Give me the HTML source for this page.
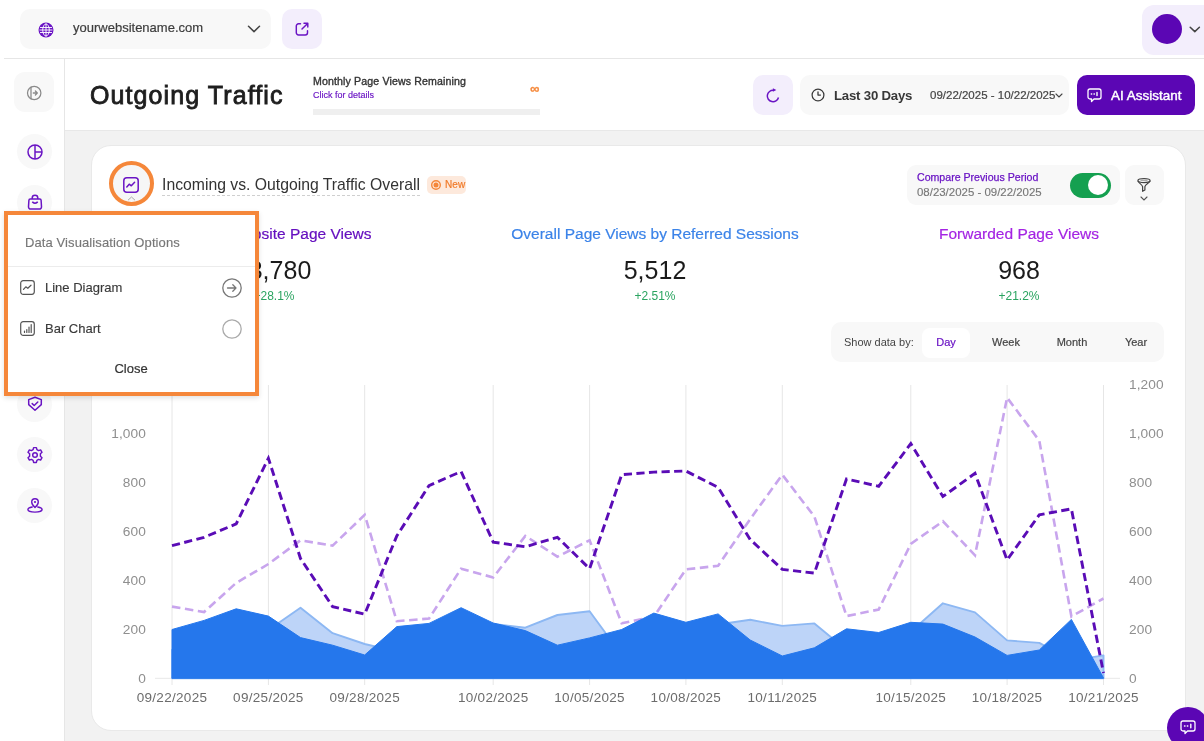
<!DOCTYPE html>
<html><head><meta charset="utf-8">
<style>
*{box-sizing:border-box;margin:0;padding:0}
html,body{width:1204px;height:741px;overflow:hidden;background:#fff;font-family:"Liberation Sans",sans-serif;color:#333}
.a{position:absolute}
.t{position:absolute;white-space:nowrap;line-height:1;will-change:transform}
svg.chart{position:absolute;left:0;top:0;will-change:transform}
.yl{font-family:"Liberation Sans",sans-serif;font-size:13.7px;letter-spacing:0.1px;fill:#8f8f8f}
.xl{font-family:"Liberation Sans",sans-serif;font-size:13.5px;letter-spacing:0.3px;fill:#6c6c6c}
.ic{position:absolute;overflow:visible}
</style></head><body>

<!-- top bar -->
<div class="a" style="left:4px;top:58px;width:1200px;height:1px;background:#e6e6e6"></div>
<div class="a" style="left:20px;top:9px;width:251px;height:40px;background:#f8f8f8;border-radius:10px"></div>
<svg class="ic" style="left:38.2px;top:21.6px" width="16" height="16" viewBox="0 0 16 16">
  <circle cx="8" cy="8" r="7.5" fill="#6a14c4"/>
  <g stroke="#fff" stroke-width="0.9" fill="none">
    <ellipse cx="8" cy="8" rx="3.3" ry="6"/>
    <line x1="2" y1="5.5" x2="14" y2="5.5"/><line x1="1.5" y1="8" x2="14.5" y2="8"/><line x1="2" y1="10.5" x2="14" y2="10.5"/>
    <line x1="8" y1="1.5" x2="8" y2="14.5"/>
  </g>
</svg>
<div class="t" style="left:73px;top:20.6px;font-size:13px;color:#3d3d3d;-webkit-text-stroke:0.2px #3d3d3d">yourwebsitename.com</div>
<svg class="ic" style="left:246.5px;top:24.8px" width="14" height="8" viewBox="0 0 14 8"><path d="M1.5 1.3 L7 6.6 L12.5 1.3" fill="none" stroke="#444" stroke-width="1.5" stroke-linecap="round" stroke-linejoin="round"/></svg>
<div class="a" style="left:282px;top:9px;width:40px;height:40px;background:#f3eefc;border-radius:10px"></div>
<svg class="ic" style="left:295px;top:22px" width="14" height="14" viewBox="0 0 14 14"><path d="M5.5 1.8 H3.5 a2.2 2.2 0 0 0 -2.2 2.2 V10.8 a2.2 2.2 0 0 0 2.2 2.2 H10.3 a2.2 2.2 0 0 0 2.2 -2.2 V8.8 M9 1.2 H12.8 V5 M12.6 1.4 L7 7" fill="none" stroke="#6a14c4" stroke-width="1.45" stroke-linecap="round" stroke-linejoin="round"/></svg>
<div class="a" style="left:1142px;top:4.5px;width:80px;height:50px;background:#f3eefc;border-radius:12px"></div>
<div class="a" style="left:1152px;top:14.3px;width:30px;height:30px;background:#5b06b4;border-radius:50%"></div>
<svg class="ic" style="left:1189px;top:25.5px" width="12" height="7" viewBox="0 0 12 7"><path d="M1.2 1.2 L5.8 5.6 L10.4 1.2" fill="none" stroke="#444" stroke-width="1.5" stroke-linecap="round" stroke-linejoin="round"/></svg>

<!-- sidebar -->
<div class="a" style="left:64px;top:58px;width:1px;height:683px;background:#e6e6e6"></div>
<div class="a" style="left:14px;top:72px;width:40px;height:40px;background:#f8f8f8;border-radius:11px"></div>
<svg class="ic" style="left:26px;top:85px" width="16" height="16" viewBox="0 0 16 16"><circle cx="8.2" cy="8" r="6.7" fill="none" stroke="#8a8a8a" stroke-width="1.25"/><path d="M5 2.2 V13.8 M7.3 8 H11.2 M9.4 6 L11.3 8 L9.4 10" fill="none" stroke="#8a8a8a" stroke-width="1.3" stroke-linecap="round" stroke-linejoin="round"/></svg>
<!--SIDEBAR-->
<div class="a" style="left:17px;top:134px;width:35px;height:35px;background:#f8f8f8;border-radius:50%"></div>
<svg class="ic" style="left:26.5px;top:143.5px" width="16" height="16" viewBox="0 0 16 16"><circle cx="8" cy="8" r="7" fill="none" stroke="#6a14c4" stroke-width="1.5"/><path d="M8 1 V15 M8 8 H15" fill="none" stroke="#6a14c4" stroke-width="1.5"/></svg>
<div class="a" style="left:17px;top:184.5px;width:35px;height:35px;background:#f8f8f8;border-radius:50%"></div>
<svg class="ic" style="left:26.5px;top:193.5px" width="16" height="16" viewBox="0 0 16 16"><path d="M5.2 5 V3.9 a2.8 2.6 0 0 1 5.6 0 V5 M3.2 5.1 H12.8 a1.3 1.3 0 0 1 1.3 1.2 L14.5 12.8 a2.2 2.2 0 0 1 -2.2 2.3 H3.7 a2.2 2.2 0 0 1 -2.2 -2.3 L1.9 6.3 a1.3 1.3 0 0 1 1.3 -1.2 Z M5.6 8.2 Q8 10.2 10.4 8.2" fill="none" stroke="#6a14c4" stroke-width="1.5" stroke-linejoin="round" stroke-linecap="round"/></svg>
<div class="a" style="left:17px;top:387px;width:35px;height:35px;background:#f8f8f8;border-radius:50%"></div>
<svg class="ic" style="left:26.5px;top:396px" width="16" height="16" viewBox="0 0 16 16"><path d="M8 1.3 L14.3 3.6 V8.6 L8 14.2 L1.7 8.6 V3.6 Z M5.2 7.6 L7.2 9.5 L10.8 6" fill="none" stroke="#6a14c4" stroke-width="1.5" stroke-linejoin="round" stroke-linecap="round"/></svg>
<div class="a" style="left:17px;top:437px;width:35px;height:35px;background:#f8f8f8;border-radius:50%"></div>
<svg class="ic" style="left:26.5px;top:446.5px" width="16" height="16" viewBox="0 0 16 16"><path d="M6.6 0.6 H9.4 L9.9 2.7 L11.6 3.6 L13.6 2.9 L15 5.3 L13.4 6.8 V9.2 L15 10.7 L13.6 13.1 L11.6 12.4 L9.9 13.3 L9.4 15.4 H6.6 L6.1 13.3 L4.4 12.4 L2.4 13.1 L1 10.7 L2.6 9.2 V6.8 L1 5.3 L2.4 2.9 L4.4 3.6 L6.1 2.7 Z" fill="none" stroke="#6a14c4" stroke-width="1.45" stroke-linejoin="round"/><circle cx="8" cy="8" r="2.3" fill="none" stroke="#6a14c4" stroke-width="1.45"/></svg>
<div class="a" style="left:17px;top:488px;width:35px;height:35px;background:#f8f8f8;border-radius:50%"></div>
<svg class="ic" style="left:26.5px;top:497px" width="16" height="16" viewBox="0 0 16 16"><path d="M8 10.6 C8 10.6 4.7 7.5 4.7 5 a3.3 3.3 0 0 1 6.6 0 C11.3 7.5 8 10.6 8 10.6 Z" fill="none" stroke="#6a14c4" stroke-width="1.4" stroke-linejoin="round"/><circle cx="8" cy="5" r="1.1" fill="#6a14c4"/><path d="M5.2 10 C2.6 10.5 0.9 11.5 0.9 12.6 C0.9 14.1 4.1 15.1 8 15.1 C11.9 15.1 15.1 14.1 15.1 12.6 C15.1 11.5 13.4 10.5 10.8 10" fill="none" stroke="#6a14c4" stroke-width="1.4" stroke-linecap="round"/></svg>

<!-- header -->
<div class="t" style="left:90px;top:82.5px;font-size:25px;color:#1e1e1e;-webkit-text-stroke:0.85px #1e1e1e;letter-spacing:1.1px">Outgoing Traffic</div>
<div class="t" style="left:313px;top:76px;font-size:10.6px;color:#333;-webkit-text-stroke:0.35px #333;letter-spacing:0.13px">Monthly Page Views Remaining</div>
<div class="t" style="left:313px;top:91.3px;font-size:9px;color:#6a14c4;-webkit-text-stroke:0.15px #6a14c4">Click for details</div>
<div class="t" style="left:530px;top:81.5px;font-size:13px;font-weight:bold;color:#f5883a;-webkit-text-stroke:0.3px #f5883a">∞</div>
<div class="a" style="left:313px;top:109px;width:227px;height:6px;background:#efefef"></div>
<div class="a" style="left:65px;top:130px;width:1139px;height:611px;background:#f2f2f2;border-top:1.5px solid #e8e8e8"></div>

<div class="a" style="left:753px;top:75px;width:40px;height:40px;background:#f3eefc;border-radius:10px"></div>
<svg class="ic" style="left:765.3px;top:87.7px" width="16" height="16" viewBox="0 0 16 16"><path d="M13.5 9.48 A5.7 5.7 0 1 1 8.6 2.33" fill="none" stroke="#6a14c4" stroke-width="1.5" stroke-linecap="butt"/><path d="M7.9 0.3 L11.3 2.0 L7.9 3.7 Z" fill="#6a14c4"/></svg>
<div class="a" style="left:800px;top:75px;width:269px;height:40px;background:#f8f8f8;border-radius:10px"></div>
<svg class="ic" style="left:811px;top:88px" width="14" height="14" viewBox="0 0 14 14"><circle cx="7" cy="7" r="5.9" fill="none" stroke="#3a3a3a" stroke-width="1.25"/><path d="M7 3.9 V7.1 H9.4" fill="none" stroke="#3a3a3a" stroke-width="1.3" stroke-linecap="round" stroke-linejoin="round"/></svg>
<div class="t" style="left:834px;top:88.8px;font-size:13.2px;font-weight:bold;color:#383838;letter-spacing:-0.2px">Last 30 Days</div>
<div class="t" style="left:930px;top:90px;font-size:11.5px;color:#444;-webkit-text-stroke:0.2px #444">09/22/2025 - 10/22/2025</div>
<svg class="ic" style="left:1055px;top:93px" width="8" height="5" viewBox="0 0 8 5"><path d="M1 1 L4 4 L7 1" fill="none" stroke="#444" stroke-width="1.1" stroke-linecap="round"/></svg>
<div class="a" style="left:1077px;top:75px;width:118px;height:40px;background:#5b06b4;border-radius:10px"></div>
<svg class="ic" style="left:1087px;top:88px" width="15" height="15" viewBox="0 0 15 15"><path d="M3 1 H12 a2 2 0 0 1 2 2 V9 a2 2 0 0 1 -2 2 H7 L4.5 13.5 V11 H3 a2 2 0 0 1 -2 -2 V3 a2 2 0 0 1 2 -2 Z" fill="none" stroke="#fff" stroke-width="1.3" stroke-linejoin="round"/><path d="M4.3 6 H4.7 M7 6 H7.4 M10 4.5 V7.5" stroke="#fff" stroke-width="1.4" stroke-linecap="round"/></svg>
<div class="t" style="left:1111px;top:88.5px;font-size:13.4px;color:#fff;-webkit-text-stroke:0.45px #fff;letter-spacing:0.05px">AI Assistant</div>

<!-- card -->
<div class="a" style="left:90.5px;top:144.5px;width:1095px;height:586px;background:#fff;border-radius:20px;border:1px solid #e9e9e9"></div>

<div class="a" style="left:109.2px;top:161.2px;width:44.8px;height:44.8px;border:4px solid #f5873a;border-radius:50%;background:#f6f6f6"></div>
<svg class="ic" style="left:123px;top:177px" width="16" height="16" viewBox="0 0 16 16"><rect x="0.8" y="0.8" width="14.4" height="14.4" rx="3" fill="none" stroke="#6a14c4" stroke-width="1.5"/><path d="M3.8 10 L6.2 7.2 L8.3 8.8 L11.6 5.2" fill="none" stroke="#6a14c4" stroke-width="1.5" stroke-linecap="round" stroke-linejoin="round"/></svg>
<svg class="ic" style="left:127px;top:196px" width="9" height="5" viewBox="0 0 9 5"><path d="M1 4.2 L4.5 1 L8 4.2" fill="none" stroke="#aaa" stroke-width="1"/></svg>
<div class="t" style="left:162px;top:177px;font-size:15.75px;color:#333">Incoming vs. Outgoing Traffic Overall</div>
<div class="a" style="left:162px;top:195px;width:258px;height:0;border-top:1px dashed #cfcfcf"></div>
<div class="a" style="left:427px;top:176px;width:39px;height:18px;background:#fde9dc;border-radius:5px"></div>
<svg class="ic" style="left:430.7px;top:180.1px" width="10" height="10" viewBox="0 0 10 10"><circle cx="5" cy="5" r="4.3" fill="none" stroke="#f5873a" stroke-width="1.4"/><circle cx="5" cy="5" r="2.5" fill="#f5873a"/></svg>
<div class="t" style="left:444.5px;top:180px;font-size:10px;color:#f07b2a;-webkit-text-stroke:0.2px #f07b2a;letter-spacing:0.15px">New</div>

<div class="a" style="left:907px;top:165px;width:213px;height:40px;background:#f8f8f8;border-radius:9px"></div>
<div class="t" style="left:917px;top:172px;font-size:10.6px;color:#6a14c4;-webkit-text-stroke:0.25px #6a14c4">Compare Previous Period</div>
<div class="t" style="left:917px;top:187px;font-size:11.45px;color:#777;-webkit-text-stroke:0.15px #777">08/23/2025 - 09/22/2025</div>
<div class="a" style="left:1070px;top:172.7px;width:40.5px;height:25px;background:#15a050;border-radius:12.5px"></div>
<div class="a" style="left:1088px;top:175.2px;width:20px;height:20px;background:#fff;border-radius:50%"></div>
<div class="a" style="left:1125px;top:165px;width:39px;height:40px;background:#f8f8f8;border-radius:9px"></div>
<svg class="ic" style="left:1137px;top:178px" width="14" height="14" viewBox="0 0 14 14"><ellipse cx="7" cy="2.6" rx="6.1" ry="2" fill="none" stroke="#444" stroke-width="1.2"/><path d="M0.9 2.8 C1.2 4.6 5.2 6.6 5.6 8.6 V13.3 L7.9 12 V8.6 C8.3 6.6 12.8 4.6 13.1 2.8" fill="none" stroke="#444" stroke-width="1.2" stroke-linejoin="round"/><path d="M3.5 2.6 H10.5" stroke="#999" stroke-width="0.9"/></svg>
<svg class="ic" style="left:1140px;top:195.7px" width="8" height="5" viewBox="0 0 8 5"><path d="M1 1 L4 4 L7 1" fill="none" stroke="#555" stroke-width="1.1" stroke-linecap="round"/></svg>

<!-- stats -->
<div class="t" style="left:73.5px;width:400px;text-align:center;top:225.8px;font-size:15.5px;color:#6510bf;-webkit-text-stroke:0.2px #6510bf">Overall Website Page Views</div>
<div class="t" style="left:455px;width:400px;text-align:center;top:225.8px;font-size:15.5px;color:#3b83e8;-webkit-text-stroke:0.2px #3b83e8">Overall Page Views by Referred Sessions</div>
<div class="t" style="left:819px;width:400px;text-align:center;top:225.8px;font-size:15.5px;color:#a424e3;-webkit-text-stroke:0.2px #a424e3">Forwarded Page Views</div>
<div class="t" style="left:180px;width:200px;text-align:center;top:257.8px;font-size:25px;color:#1b1b1b">3,780</div>
<div class="t" style="left:555px;width:200px;text-align:center;top:257.8px;font-size:25px;color:#1b1b1b">5,512</div>
<div class="t" style="left:919px;width:200px;text-align:center;top:257.8px;font-size:25px;color:#1b1b1b">968</div>
<div class="t" style="left:173.5px;width:200px;text-align:center;top:290px;font-size:12px;color:#2aa460">+28.1%</div>
<div class="t" style="left:555px;width:200px;text-align:center;top:290px;font-size:12px;color:#2aa460">+2.51%</div>
<div class="t" style="left:919px;width:200px;text-align:center;top:290px;font-size:12px;color:#2aa460">+21.2%</div>

<div class="a" style="left:831px;top:322px;width:333px;height:40px;background:#f8f8f8;border-radius:10px"></div>
<div class="a" style="left:922px;top:327.5px;width:48px;height:30px;background:#fff;border-radius:8px"></div>
<div class="t" style="left:844px;top:337px;font-size:11px;color:#444">Show data by:</div>
<div class="t" style="left:906px;width:80px;text-align:center;top:337px;font-size:11px;color:#6a14c4;-webkit-text-stroke:0.2px #6a14c4">Day</div>
<div class="t" style="left:966px;width:80px;text-align:center;top:337px;font-size:11px;color:#444;-webkit-text-stroke:0.2px #444">Week</div>
<div class="t" style="left:1032px;width:80px;text-align:center;top:337px;font-size:11px;color:#444;-webkit-text-stroke:0.2px #444">Month</div>
<div class="t" style="left:1096px;width:80px;text-align:center;top:337px;font-size:11px;color:#444;-webkit-text-stroke:0.2px #444">Year</div>

<svg class="chart" width="1204" height="741" viewBox="0 0 1204 741">
<line x1="172.0" y1="385" x2="172.0" y2="685" stroke="#e6e6e6" stroke-width="1"/>
<line x1="268.4" y1="385" x2="268.4" y2="685" stroke="#e6e6e6" stroke-width="1"/>
<line x1="364.7" y1="385" x2="364.7" y2="685" stroke="#e6e6e6" stroke-width="1"/>
<line x1="493.2" y1="385" x2="493.2" y2="685" stroke="#e6e6e6" stroke-width="1"/>
<line x1="589.6" y1="385" x2="589.6" y2="685" stroke="#e6e6e6" stroke-width="1"/>
<line x1="685.9" y1="385" x2="685.9" y2="685" stroke="#e6e6e6" stroke-width="1"/>
<line x1="782.3" y1="385" x2="782.3" y2="685" stroke="#e6e6e6" stroke-width="1"/>
<line x1="910.8" y1="385" x2="910.8" y2="685" stroke="#e6e6e6" stroke-width="1"/>
<line x1="1007.1" y1="385" x2="1007.1" y2="685" stroke="#e6e6e6" stroke-width="1"/>
<line x1="1103.5" y1="385" x2="1103.5" y2="685" stroke="#e6e6e6" stroke-width="1"/>
<line x1="155" y1="678.3" x2="1120" y2="678.3" stroke="#e8e8e8" stroke-width="1"/>
<path d="M172.0,606.6 L204.1,612.0 L236.2,582.9 L268.4,564.0 L300.5,540.3 L332.6,545.7 L364.7,514.8 L396.8,621.2 L429.0,618.6 L461.1,568.7 L493.2,577.4 L525.3,535.9 L557.4,556.7 L589.6,540.3 L621.7,623.2 L653.8,616.8 L685.9,569.4 L718.1,565.8 L750.2,519.1 L782.3,474.7 L814.4,516.6 L846.5,616.1 L878.7,609.5 L910.8,543.9 L942.9,521.3 L975.0,555.3 L1007.1,397.6 L1039.3,440.7 L1071.4,616.5 L1103.5,598.5" fill="none" stroke="#c8a5ed" stroke-width="2.6" stroke-dasharray="8.5 4.6"/>
<path d="M172.0,650.0 L204.1,640.0 L236.2,640.0 L268.4,630.0 L300.5,607.7 L332.6,633.2 L364.7,644.0 L396.8,651.7 L429.0,640.0 L461.1,630.0 L493.2,624.0 L525.3,627.7 L557.4,615.0 L589.6,611.3 L621.7,655.0 L653.8,640.0 L685.9,640.0 L718.1,624.5 L750.2,619.7 L782.3,625.9 L814.4,623.4 L846.5,649.9 L878.7,640.0 L910.8,631.7 L942.9,603.3 L975.0,612.4 L1007.1,640.4 L1039.3,642.9 L1071.4,660.6 L1103.5,655.4 L1103.5,678.3 L172.0,678.3 Z" fill="#bdd4f8" stroke="#8db8f3" stroke-width="1.9" stroke-linejoin="round"/>
<path d="M172.0,629.5 L204.1,620.4 L236.2,608.8 L268.4,616.1 L300.5,637.6 L332.6,645.2 L364.7,655.0 L396.8,626.6 L429.0,623.4 L461.1,607.7 L493.2,623.0 L525.3,630.6 L557.4,645.2 L589.6,637.9 L621.7,629.5 L653.8,613.1 L685.9,622.3 L718.1,613.9 L750.2,640.0 L782.3,656.0 L814.4,647.8 L846.5,628.8 L878.7,632.5 L910.8,622.3 L942.9,624.1 L975.0,637.0 L1007.1,655.4 L1039.3,650.0 L1071.4,619.4 L1103.5,678.0 L1103.5,678.3 L172.0,678.3 Z" fill="#2577ec" stroke="#2577ec" stroke-width="1" stroke-linejoin="round"/>
<path d="M172.0,545.7 L204.1,537.3 L236.2,523.9 L268.4,458.3 L300.5,558.5 L332.6,606.6 L364.7,614.2 L396.8,535.9 L429.0,485.6 L461.1,471.5 L493.2,542.1 L525.3,546.8 L557.4,537.3 L589.6,568.7 L621.7,474.7 L653.8,472.1 L685.9,471.0 L718.1,487.4 L750.2,539.5 L782.3,569.4 L814.4,573.1 L846.5,479.0 L878.7,486.3 L910.8,443.7 L942.9,496.5 L975.0,473.4 L1007.1,560.0 L1039.3,514.8 L1071.4,508.9 L1103.5,673.0" fill="none" stroke="#5a0cb6" stroke-width="2.9" stroke-dasharray="8.2 4.4"/>
<text x="146" y="682.8" text-anchor="end" class="yl">0</text>
<text x="1129" y="682.8" text-anchor="start" class="yl">0</text>
<text x="146" y="633.8" text-anchor="end" class="yl">200</text>
<text x="1129" y="633.8" text-anchor="start" class="yl">200</text>
<text x="146" y="584.9" text-anchor="end" class="yl">400</text>
<text x="1129" y="584.9" text-anchor="start" class="yl">400</text>
<text x="146" y="535.9" text-anchor="end" class="yl">600</text>
<text x="1129" y="535.9" text-anchor="start" class="yl">600</text>
<text x="146" y="486.9" text-anchor="end" class="yl">800</text>
<text x="1129" y="486.9" text-anchor="start" class="yl">800</text>
<text x="146" y="438.0" text-anchor="end" class="yl">1,000</text>
<text x="1129" y="438.0" text-anchor="start" class="yl">1,000</text>
<text x="146" y="389.0" text-anchor="end" class="yl">1,200</text>
<text x="1129" y="389.0" text-anchor="start" class="yl">1,200</text>
<text x="172.0" y="701.5" text-anchor="middle" class="xl">09/22/2025</text>
<text x="268.4" y="701.5" text-anchor="middle" class="xl">09/25/2025</text>
<text x="364.7" y="701.5" text-anchor="middle" class="xl">09/28/2025</text>
<text x="493.2" y="701.5" text-anchor="middle" class="xl">10/02/2025</text>
<text x="589.6" y="701.5" text-anchor="middle" class="xl">10/05/2025</text>
<text x="685.9" y="701.5" text-anchor="middle" class="xl">10/08/2025</text>
<text x="782.3" y="701.5" text-anchor="middle" class="xl">10/11/2025</text>
<text x="910.8" y="701.5" text-anchor="middle" class="xl">10/15/2025</text>
<text x="1007.1" y="701.5" text-anchor="middle" class="xl">10/18/2025</text>
<text x="1103.5" y="701.5" text-anchor="middle" class="xl">10/21/2025</text>
</svg>

<!-- popup -->
<div class="a" style="left:4px;top:211px;width:255px;height:185px;background:#fff;border:4px solid #f5873a;box-shadow:0 2px 5px rgba(0,0,0,0.12)"></div>
<div class="t" style="left:25px;top:235.6px;font-size:13px;color:#777;letter-spacing:0.1px;-webkit-text-stroke:0.15px #777">Data Visualisation Options</div>
<div class="a" style="left:8px;top:266px;width:247px;height:1px;background:#ececec"></div>
<svg class="ic" style="left:20px;top:280px" width="15" height="15" viewBox="0 0 15 15"><rect x="0.7" y="0.7" width="13.6" height="13.6" rx="2.5" fill="none" stroke="#555" stroke-width="1.2"/><path d="M3.5 9.3 L5.8 6.8 L7.8 8.3 L11 5.2" fill="none" stroke="#555" stroke-width="1.2" stroke-linecap="round" stroke-linejoin="round"/></svg>
<div class="t" style="left:45px;top:281px;font-size:13px;color:#3a3a3a;-webkit-text-stroke:0.15px #3a3a3a">Line Diagram</div>
<svg class="ic" style="left:221.5px;top:277.5px" width="20" height="20" viewBox="0 0 20 20"><circle cx="10" cy="10" r="9.2" fill="none" stroke="#777" stroke-width="1.3"/><path d="M5.5 10 H14 M10.8 6.8 L14 10 L10.8 13.2" fill="none" stroke="#777" stroke-width="1.3" stroke-linecap="round" stroke-linejoin="round"/></svg>
<svg class="ic" style="left:20px;top:321px" width="15" height="15" viewBox="0 0 15 15"><rect x="0.7" y="0.7" width="13.6" height="13.6" rx="2.5" fill="none" stroke="#555" stroke-width="1.2"/><path d="M4.5 11.5 V10 M6.8 11.5 V8.5 M9 11.5 V6 M11.2 11.5 V3.5" fill="none" stroke="#555" stroke-width="1.2" stroke-linecap="round"/></svg>
<div class="t" style="left:45px;top:322px;font-size:13px;color:#3a3a3a;-webkit-text-stroke:0.15px #3a3a3a">Bar Chart</div>
<svg class="ic" style="left:221.5px;top:318.5px" width="20" height="20" viewBox="0 0 20 20"><circle cx="10" cy="10" r="9.2" fill="none" stroke="#aaa" stroke-width="1.3"/></svg>
<div class="t" style="left:81px;width:100px;text-align:center;top:362px;font-size:13px;color:#333;-webkit-text-stroke:0.2px #333">Close</div>

<!-- chat bubble -->
<div class="a" style="left:1167px;top:707px;width:42px;height:42px;background:#5b06b4;border-radius:50%"></div>
<svg class="ic" style="left:1179.5px;top:719.5px" width="16" height="15" viewBox="0 0 16 15"><path d="M3 1 H13 a2 2 0 0 1 2 2 V9 a2 2 0 0 1 -2 2 H7.5 L5 13.5 V11 H3 a2 2 0 0 1 -2 -2 V3 a2 2 0 0 1 2 -2 Z" fill="none" stroke="#fff" stroke-width="1.3" stroke-linejoin="round"/><path d="M4.5 6 H5 M7.3 6 H7.8 M10.8 4.3 V7.7" stroke="#fff" stroke-width="1.4" stroke-linecap="round"/></svg>

</body></html>
